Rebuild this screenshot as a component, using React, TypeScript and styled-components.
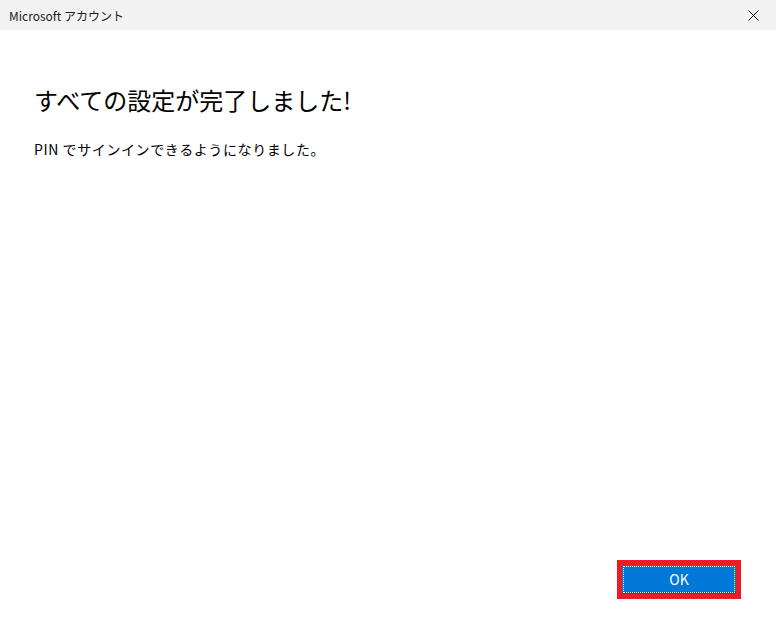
import { createGlobalStyle, styled } from "styled-components";

const GlobalStyle = createGlobalStyle`
  html, body {
    margin: 0;
    padding: 0;
    background: #ffffff;
  }
  body {
    font-family: "Noto Sans CJK JP", "Noto Sans", sans-serif;
    color: #000000;
  }
`;

const Window = styled.div`
  width: 776px;
  height: 628px;
  display: flex;
  flex-direction: column;
  background: #ffffff;
`;

const TitleBar = styled.div`
  height: 30px;
  background: #f2f2f2;
  display: flex;
  align-items: center;
  justify-content: space-between;
  padding-left: 9px;
  box-sizing: border-box;
`;

const Title = styled.span`
  font-size: 12px;
  color: #1a1a1a;
`;

const CloseButton = styled.button`
  width: 46px;
  height: 30px;
  border: none;
  background: transparent;
  display: flex;
  align-items: center;
  justify-content: center;
  padding: 0;
`;

const Content = styled.div`
  flex: 1;
  display: flex;
  flex-direction: column;
  padding: 54px 34px 0 34px;
`;

const Heading = styled.h1`
  margin: 0;
  font-size: 24px;
  font-weight: 400;
  line-height: 32px;
`;

const Message = styled.p`
  margin: 23px 0 0 0;
  font-size: 14px;
  line-height: 20px;
  letter-spacing: 0.6px;
`;

const Footer = styled.div`
  display: flex;
  justify-content: flex-end;
  padding: 0 35px 29px 0;
`;

const Highlight = styled.div`
  border: 5px solid #ed1c24;
  display: flex;
`;

const PrimaryButton = styled.button`
  width: 114px;
  height: 29px;
  border: none;
  border-bottom: 2px solid #005a9e;
  background: #0078d7;
  color: #ffffff;
  font-family: "Noto Sans CJK JP", "Noto Sans", sans-serif;
  font-size: 14px;
  padding: 0;
  position: relative;
  &::after {
    content: "";
    position: absolute;
    inset: 1px 1px -1px 1px;
    border: 1px dotted #ffffff;
  }
`;

export default function App() {
  return (
    <>
      <GlobalStyle />
      <Window>
        <TitleBar>
          <Title>Microsoft アカウント</Title>
          <CloseButton aria-label="閉じる">
            <svg width="11" height="11" viewBox="0 0 11 11">
              <path d="M0.5 0.5 L10.5 10.5 M10.5 0.5 L0.5 10.5" stroke="#000" strokeWidth="1" />
            </svg>
          </CloseButton>
        </TitleBar>
        <Content>
          <Heading>すべての設定が完了しました!</Heading>
          <Message>PIN でサインインできるようになりました。</Message>
        </Content>
        <Footer>
          <Highlight>
            <PrimaryButton>OK</PrimaryButton>
          </Highlight>
        </Footer>
      </Window>
    </>
  );
}
